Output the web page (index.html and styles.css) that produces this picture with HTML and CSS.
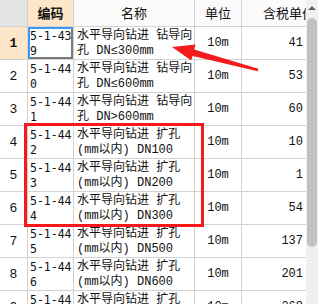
FILE: index.html
```html
<!DOCTYPE html>
<html>
<head>
<meta charset="utf-8">
<link rel="stylesheet" href="styles.css">
</head>
<body>
<div class="view">
  <div class="grid-wrap">
    <table class="grid">
      <colgroup>
        <col class="c-num"><col class="c-code"><col class="c-name"><col class="c-unit"><col class="c-price">
      </colgroup>
      <thead>
        <tr>
          <th class="corner"></th>
          <th class="h-code">编码</th>
          <th>名称</th>
          <th>单位</th>
          <th class="h-price">含税单价</th>
        </tr>
      </thead>
      <tbody>
        <tr><td class="num cur">1</td><td class="code sel">5-1-439</td><td class="name"><span>水平导向钻进 钻导向</span><span>孔 DN≤300mm</span></td><td class="unit">10m</td><td class="price">41</td></tr>
        <tr><td class="num">2</td><td class="code">5-1-440</td><td class="name"><span>水平导向钻进 钻导向</span><span>孔 DN≤600mm</span></td><td class="unit">10m</td><td class="price">53</td></tr>
        <tr><td class="num">3</td><td class="code">5-1-441</td><td class="name"><span>水平导向钻进 钻导向</span><span>孔 DN&gt;600mm</span></td><td class="unit">10m</td><td class="price">60</td></tr>
        <tr><td class="num">4</td><td class="code">5-1-442</td><td class="name"><span>水平导向钻进 扩孔</span><span>(mm以内) DN100</span></td><td class="unit">10m</td><td class="price">10</td></tr>
        <tr><td class="num">5</td><td class="code">5-1-443</td><td class="name"><span>水平导向钻进 扩孔</span><span>(mm以内) DN200</span></td><td class="unit">10m</td><td class="price">1</td></tr>
        <tr><td class="num">6</td><td class="code">5-1-444</td><td class="name"><span>水平导向钻进 扩孔</span><span>(mm以内) DN300</span></td><td class="unit">10m</td><td class="price">54</td></tr>
        <tr><td class="num">7</td><td class="code">5-1-445</td><td class="name"><span>水平导向钻进 扩孔</span><span>(mm以内) DN500</span></td><td class="unit">10m</td><td class="price">137</td></tr>
        <tr><td class="num">8</td><td class="code">5-1-446</td><td class="name"><span>水平导向钻进 扩孔</span><span>(mm以内) DN600</span></td><td class="unit">10m</td><td class="price">201</td></tr>
        <tr><td class="num">9</td><td class="code">5-1-447</td><td class="name"><span>水平导向钻进 扩孔</span><span>(mm以内) DN700</span></td><td class="unit">10m</td><td class="price">268</td></tr>
      </tbody>
    </table>
  </div>
  <div class="scrollbar">
    <div class="sb-up"></div>
    <div class="sb-thumb"></div>
  </div>
  <svg class="annot" width="318" height="304" viewBox="0 0 318 304">
    <rect x="25.5" y="124.5" width="177" height="101" fill="none" stroke="#f5191c" stroke-width="3"/>
    <polygon fill="#f21c1c" points="172,47 195.6,44.6 194.2,49.6 258.3,68.8 257.7,71.2 192.6,56.1 191.2,60.6"/>
  </svg>
</div>
</body>
</html>
```
FILE: styles.css
```css
html, body {
  margin: 0;
  padding: 0;
  background: #ffffff;
}
.view {
  position: relative;
  width: 318px;
  height: 304px;
  overflow: hidden;
  display: flex;
}
.grid-wrap {
  width: 306px;
  height: 304px;
  overflow: hidden;
}
.grid {
  table-layout: fixed;
  border-collapse: separate;
  border-spacing: 0;
  width: 306px;
  font-family: "Liberation Mono", "Noto Sans CJK SC", monospace;
  font-size: 12px;
  color: #111;
}
.c-num { width: 28px; }
.c-code { width: 46px; }
.c-name { width: 121px; }
.c-unit { width: 47px; }
.c-price { width: 64px; }
th, td {
  box-sizing: border-box;
  border-right: 1px solid #d2d2d2;
  border-bottom: 1px solid #d2d2d2;
  padding: 0;
  overflow: hidden;
  white-space: nowrap;
}
th {
  height: 27px;
  font-family: "Noto Sans CJK SC", sans-serif;
  font-weight: normal;
  font-size: 13px;
  background: #fbfbfb;
  text-align: center;
  line-height: 24px;
}
th.corner { background: #e4e4e4; }
th.h-code {
  background: #fde6c9;
  font-weight: bold;
}
th.h-price {
  text-align: left;
  padding-left: 21px;
  border-right: none;
}
td {
  height: 33px;
  vertical-align: middle;
}
td.num {
  text-align: center;
  font-family: "Liberation Mono", monospace;
  font-size: 13px;
}
td.num.cur {
  background: #fde6c9;
  font-weight: bold;
}
td.code {
  white-space: normal;
  word-break: break-all;
  vertical-align: top;
  padding: 2px 0 0 2px;
  font-family: "DejaVu Sans Mono", monospace;
  font-size: 11.5px;
  line-height: 15px;
}
td.sel {
  box-shadow: inset 2px 2px 0 #3d98f5, inset -2px -2px 0 #7a7a7a;
}
td.name {
  vertical-align: top;
  padding: 2px 0 0 3px;
  line-height: 15px;
}
td.name span {
  display: block;
}
td.unit {
  text-align: center;
}
td.price {
  text-align: right;
  padding-right: 3px;
  border-right: none;
}
.scrollbar {
  width: 12px;
  height: 304px;
  background: #f0f0f0;
  display: flex;
  flex-direction: column;
  align-items: center;
}
.sb-up {
  width: 0;
  height: 0;
  margin-top: 6px;
  border-left: 4px solid transparent;
  border-right: 4px solid transparent;
  border-bottom: 4px solid #606060;
}
.sb-thumb {
  margin-top: 8px;
  width: 10px;
  height: 229px;
  border-radius: 5px;
  background: #c2c2c2;
}
.annot {
  position: absolute;
  left: 0;
  top: 0;
  pointer-events: none;
}
```
